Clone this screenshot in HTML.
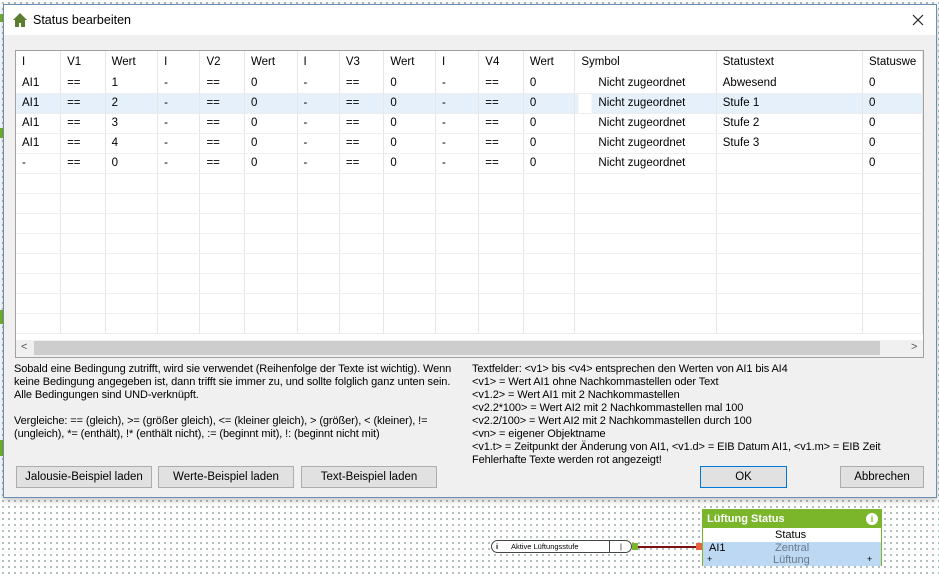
<!DOCTYPE html><html><head><style>
*{margin:0;padding:0;box-sizing:border-box}
body{width:939px;height:575px;overflow:hidden;position:relative;font-family:"Liberation Sans",sans-serif;font-size:11.5px;color:#000;background-color:#fff;background-image:radial-gradient(#9aa 0.8px,transparent 0.9px);background-size:6px 6px}
.a{position:absolute}
#dlg{left:3px;top:4px;width:934px;height:494px;background:#f0f0f0;border:1px solid #6a8fb5;box-shadow:0 2px 6px rgba(0,0,0,.25)}
#tb{left:0;top:0;width:932px;height:30px;background:#fff}
table{border-collapse:collapse;table-layout:fixed}
td{height:20px;padding-left:6px;border-right:1px solid #e6e6e6;border-bottom:1px solid #eee;white-space:nowrap;overflow:hidden}
tr.h td{height:22px;border-bottom:none}
tr.s td{background:#e5f0fb}
.btn{background:#e1e1e1;border:1px solid #adadad;text-align:center;line-height:20px;height:22px;font-size:11.5px}
.t{line-height:13px;white-space:nowrap;font-size:11px}
</style></head><body>
<div class="a" style="left:0;top:14px;width:4px;height:8px;background:#7ab52a"></div>
<div class="a" style="left:0;top:128px;width:4px;height:10px;background:#7ab52a"></div>
<div class="a" style="left:0;top:310px;width:4px;height:14px;background:#7ab52a"></div>
<div class="a" style="left:0;top:440px;width:4px;height:16px;background:#7ab52a"></div>
<div class="a" id="dlg">
<div class="a" id="tb">
<svg class="a" style="left:8px;top:7px" width="16" height="16" viewBox="0 0 16 16"><path d="M8 1L1 8h2v7h4v-4h2v4h4V8h2z" fill="#5a7d2e"/></svg>
<div class="a" style="left:29px;top:8px;font-size:12.5px">Status bearbeiten</div>
<svg class="a" style="left:908px;top:9px" width="12" height="12" viewBox="0 0 12 12"><path d="M1 1L11 11M11 1L1 11" stroke="#222" stroke-width="1.2"/></svg>
</div>
<div class="a" style="left:11px;top:45px;width:909px;height:308px;background:#fff;border:1px solid #a0a0a0;overflow:hidden">
<table>
<colgroup><col style="width:45px"><col style="width:45px"><col style="width:53px"><col style="width:43px"><col style="width:45px"><col style="width:53px"><col style="width:43px"><col style="width:45px"><col style="width:52px"><col style="width:44px"><col style="width:45px"><col style="width:52px"><col style="width:142px"><col style="width:148px"><col style="width:60px"></colgroup>
<tr class="h"><td>I</td><td>V1</td><td>Wert</td><td>I</td><td>V2</td><td>Wert</td><td>I</td><td>V3</td><td>Wert</td><td>I</td><td>V4</td><td>Wert</td><td>Symbol</td><td>Statustext</td><td>Statuswe</td></tr>
<tr><td>AI1</td><td>==</td><td>1</td><td>-</td><td>==</td><td>0</td><td>-</td><td>==</td><td>0</td><td>-</td><td>==</td><td>0</td><td style="padding-left:23px">Nicht zugeordnet</td><td>Abwesend</td><td>0</td></tr>
<tr class="s"><td>AI1</td><td>==</td><td>2</td><td>-</td><td>==</td><td>0</td><td>-</td><td>==</td><td>0</td><td>-</td><td>==</td><td>0</td><td style="padding-left:23px;background:linear-gradient(90deg,#e5f0fb 3px,#fff 3px,#fff 16px,#e5f0fb 16px)">Nicht zugeordnet</td><td>Stufe 1</td><td>0</td></tr>
<tr><td>AI1</td><td>==</td><td>3</td><td>-</td><td>==</td><td>0</td><td>-</td><td>==</td><td>0</td><td>-</td><td>==</td><td>0</td><td style="padding-left:23px">Nicht zugeordnet</td><td>Stufe 2</td><td>0</td></tr>
<tr><td>AI1</td><td>==</td><td>4</td><td>-</td><td>==</td><td>0</td><td>-</td><td>==</td><td>0</td><td>-</td><td>==</td><td>0</td><td style="padding-left:23px">Nicht zugeordnet</td><td>Stufe 3</td><td>0</td></tr>
<tr><td>-</td><td>==</td><td>0</td><td>-</td><td>==</td><td>0</td><td>-</td><td>==</td><td>0</td><td>-</td><td>==</td><td>0</td><td style="padding-left:23px">Nicht zugeordnet</td><td></td><td>0</td></tr>
<tr><td></td><td></td><td></td><td></td><td></td><td></td><td></td><td></td><td></td><td></td><td></td><td></td><td></td><td></td><td></td></tr>
<tr><td></td><td></td><td></td><td></td><td></td><td></td><td></td><td></td><td></td><td></td><td></td><td></td><td></td><td></td><td></td></tr>
<tr><td></td><td></td><td></td><td></td><td></td><td></td><td></td><td></td><td></td><td></td><td></td><td></td><td></td><td></td><td></td></tr>
<tr><td></td><td></td><td></td><td></td><td></td><td></td><td></td><td></td><td></td><td></td><td></td><td></td><td></td><td></td><td></td></tr>
<tr><td></td><td></td><td></td><td></td><td></td><td></td><td></td><td></td><td></td><td></td><td></td><td></td><td></td><td></td><td></td></tr>
<tr><td></td><td></td><td></td><td></td><td></td><td></td><td></td><td></td><td></td><td></td><td></td><td></td><td></td><td></td><td></td></tr>
<tr><td></td><td></td><td></td><td></td><td></td><td></td><td></td><td></td><td></td><td></td><td></td><td></td><td></td><td></td><td></td></tr>
<tr><td></td><td></td><td></td><td></td><td></td><td></td><td></td><td></td><td></td><td></td><td></td><td></td><td></td><td></td><td></td></tr>
</table>
<div class="a" style="left:0;top:289px;width:907px;height:17px;background:#f0f0f0"></div>
<div class="a" style="left:18px;top:290px;width:846px;height:14px;background:#cdcdcd"></div>
<div class="a" style="left:5px;top:290px;color:#555;font-size:11px">&lt;</div>
<div class="a" style="left:895px;top:290px;color:#555;font-size:11px">&gt;</div>
</div>
<div class="a t" style="left:10px;top:358px;letter-spacing:-0.1px">Sobald eine Bedingung zutrifft, wird sie verwendet (Reihenfolge der Texte ist wichtig). Wenn<br>keine Bedingung angegeben ist, dann trifft sie immer zu, und sollte folglich ganz unten sein.<br>Alle Bedingungen sind UND-verknüpft.<br><br>Vergleiche: == (gleich), &gt;= (größer gleich), &lt;= (kleiner gleich), &gt; (größer), &lt; (kleiner), !=<br>(ungleich), *= (enthält), !* (enthält nicht), := (beginnt mit), !: (beginnt nicht mit)</div>
<div class="a t" style="left:468px;top:358px;letter-spacing:-0.1px">Textfelder: &lt;v1&gt; bis &lt;v4&gt; entsprechen den Werten von AI1 bis AI4<br>&lt;v1&gt; = Wert AI1 ohne Nachkommastellen oder Text<br>&lt;v1.2&gt; = Wert AI1 mit 2 Nachkommastellen<br>&lt;v2.2*100&gt; = Wert AI2 mit 2 Nachkommastellen mal 100<br>&lt;v2.2/100&gt; = Wert AI2 mit 2 Nachkommastellen durch 100<br>&lt;vn&gt; = eigener Objektname<br>&lt;v1.t&gt; = Zeitpunkt der Änderung von AI1, &lt;v1.d&gt; = EIB Datum AI1, &lt;v1.m&gt; = EIB Zeit<br>Fehlerhafte Texte werden rot angezeigt!</div>
<div class="a btn" style="left:12px;top:461px;width:136px">Jalousie-Beispiel laden</div>
<div class="a btn" style="left:154px;top:461px;width:136px">Werte-Beispiel laden</div>
<div class="a btn" style="left:297px;top:461px;width:136px">Text-Beispiel laden</div>
<div class="a btn" style="left:696px;top:461px;width:87px;border:1px solid #0078d7">OK</div>
<div class="a btn" style="left:836px;top:461px;width:84px">Abbrechen</div>
</div>
<div class="a" style="left:491px;top:540px;width:141px;height:13px;border:1px solid #444;border-radius:7px;background:#fff;font-size:7.5px;line-height:11px"><span style="position:absolute;left:4px;font-weight:bold">i</span><span style="position:absolute;left:19px">Aktive Lüftungsstufe</span><span style="position:absolute;left:117px;top:0;height:11px;border-left:1px solid #444;width:23px;text-align:center">|</span></div>
<div class="a" style="left:632px;top:543px;width:6px;height:7px;background:#7ab52a"></div>
<div class="a" style="left:638px;top:546px;width:60px;height:2px;background:#7a1010"></div>
<div class="a" style="left:696px;top:543px;width:6px;height:7px;background:#e8643c"></div>
<div class="a" style="left:702px;top:509px;width:180px;height:57px;border:1px solid #7ab52a;background:#fff">
<div class="a" style="left:0;top:0;width:178px;height:18px;background:#7ab52a;color:#fff;font-weight:bold;font-size:11px;line-height:18px;padding-left:4px">Lüftung Status</div>
<div class="a" style="left:163px;top:3px;width:12px;height:12px;border-radius:6px;background:#fff;color:#7ab52a;font-size:9px;font-weight:bold;text-align:center;line-height:12px">i</div>
<div class="a" style="left:72px;top:19px;font-size:11px">Status</div>
<div class="a" style="left:0;top:32px;width:178px;height:24px;background:#bcd8f2"></div>
<div class="a" style="left:6px;top:32px;font-size:11px">AI1</div>
<div class="a" style="left:72px;top:32px;font-size:11px;color:#6a7a8a">Zentral</div>
<div class="a" style="left:4px;top:44px;font-size:9px">+</div>
<div class="a" style="left:70px;top:44px;font-size:11px;color:#6a7a8a">Lüftung</div>
<div class="a" style="left:164px;top:44px;font-size:9px">+</div>
</div>
</body></html>
